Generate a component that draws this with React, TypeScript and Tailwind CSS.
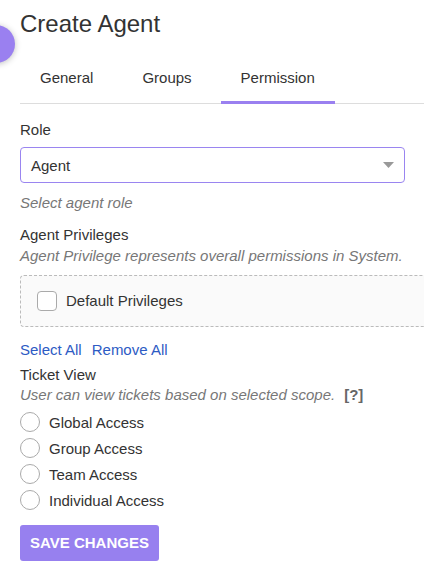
import { useState } from "react";

const scopes = ["Global Access", "Group Access", "Team Access", "Individual Access"];
const tabs = ["General", "Groups", "Permission"];

export default function App() {
  const [scope, setScope] = useState<string | null>(null);
  const [defaultPriv, setDefaultPriv] = useState(false);

  return (
    <div className="relative w-[424px] h-[576px] overflow-hidden bg-white font-['Liberation_Sans',Arial,sans-serif] text-[15px] leading-[21.4px] text-[#333]">
      {/* floating side button */}
      <div className="absolute left-[-23px] top-[25px] w-[38px] h-[38px] rounded-full bg-[#9a80f0] shadow-[0_1px_6px_rgba(0,0,0,0.25)]" />

      <div className="pl-5">
        <h1 className="mt-[10px] text-[24px] leading-[28px] font-normal">Create Agent</h1>

        {/* Tabs */}
        <div className="mt-4 flex gap-[9px] w-[420px] border-b border-[#ddd]">
          {tabs.map((t) => (
            <div
              key={t}
              className={`px-5 pt-[14px] pb-[13px] leading-[20px] -mb-px border-b-[3px] ${
                t === "Permission" ? "border-[#9a80f0]" : "border-transparent"
              }`}
            >
              {t}
            </div>
          ))}
        </div>

        {/* Role */}
        <div className="mt-[15px]">Role</div>
        <div className="mt-[7px] w-[385px] h-9 rounded-[4px] border border-[#9a85f0] flex items-center justify-between pl-[10px] pr-[10px]">
          <span>Agent</span>
          <svg width="11" height="6" viewBox="0 0 11 6">
            <polygon points="0,0 11,0 5.5,6" fill="#999" />
          </svg>
        </div>
        <div className="mt-[9px] italic text-[#777]">Select agent role</div>

        {/* Privileges */}
        <div className="mt-[10px]">Agent Privileges</div>
        <div className="italic text-[#777]">Agent Privilege represents overall permissions in System.</div>
        <div className="mt-2 w-[420px] rounded-[4px] border border-dashed border-[#bbb] bg-[#fafafa] pt-[15px] pb-[14px] pl-4">
          <label className="flex items-center h-[21px] cursor-pointer" onClick={() => setDefaultPriv(!defaultPriv)}>
            <span
              className={`w-5 h-5 rounded-[4px] border border-[#aaa] bg-white ${defaultPriv ? "bg-[#9a80f0] border-[#9a80f0]" : ""}`}
            />
            <span className="ml-[9px]">Default Privileges</span>
          </label>
        </div>
        <div className="mt-3 flex gap-[10px] text-[#2d5bc4]">
          <span>Select All</span>
          <span>Remove All</span>
        </div>

        {/* Ticket view */}
        <div className="mt-[6px] leading-[18px]">Ticket View</div>
        <div className="italic text-[#777]">
          User can view tickets based on selected scope.
          <span className="not-italic font-bold text-[#666] ml-[9px]">[?]</span>
        </div>
        <div className="mt-1 flex flex-col">
          {scopes.map((s) => (
            <label key={s} className="flex items-center h-[26px] cursor-pointer" onClick={() => setScope(s)}>
              <span className="w-5 h-5 rounded-full border border-[#aaa] bg-white flex items-center justify-center">
                {scope === s && <span className="w-[10px] h-[10px] rounded-full bg-[#9a80f0]" />}
              </span>
              <span className="ml-[9px]">{s}</span>
            </label>
          ))}
        </div>

        <button className="mt-3 h-9 px-[10px] rounded-[3px] bg-[#9780ef] text-white font-bold text-[15px] leading-[36px]">
          SAVE CHANGES
        </button>
      </div>
    </div>
  );
}
